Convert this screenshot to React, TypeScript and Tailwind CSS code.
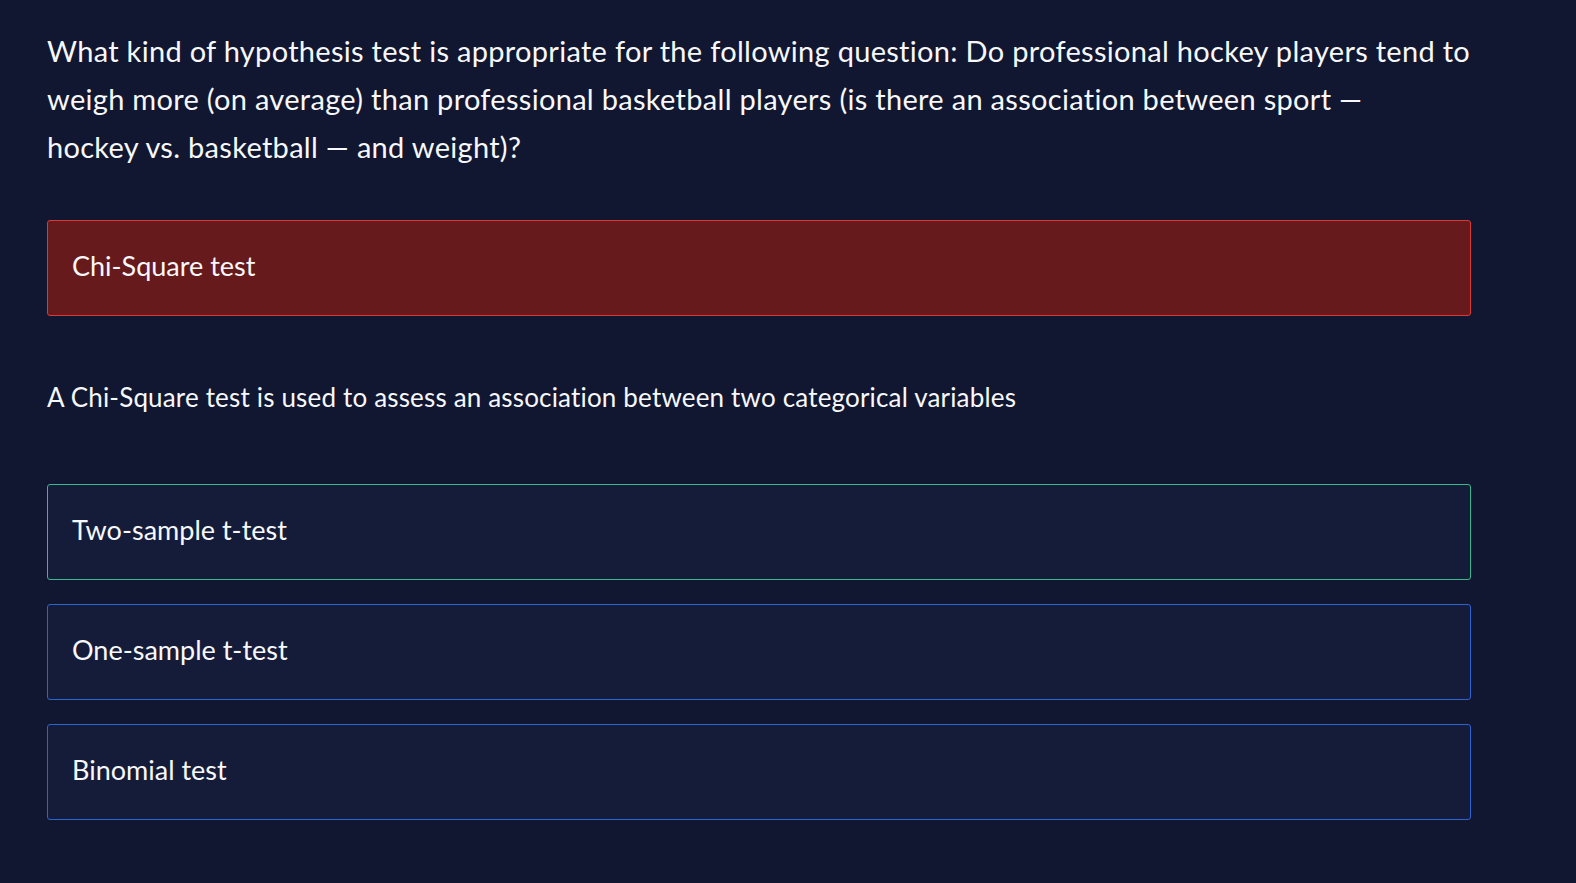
import React from "react";

const font = { fontFamily: "Lato, 'Noto Sans', sans-serif" };

export default function App() {
  return (
    <div className="min-h-[883px] w-full bg-[#111631] text-white" style={font}>
      <div className="w-[1424px] pl-[47px] pt-[27px] box-content">
        <p className="text-[29px] leading-[48px] tracking-[0.3px] text-[#f7f8fa]">
          What kind of hypothesis test is appropriate for the following question: Do professional hockey players tend to
          <br />
          weigh more (on average) than professional basketball players (is there an association between sport —
          <br />
          hockey vs. basketball — and weight)?
        </p>
        <div className="mt-[49px] flex h-[96px] items-center rounded-[3px] border border-[#dc3838] bg-[#661a1b] pb-[3px] pl-[24px] text-[27px] text-[#f7f8fa]">
          Chi-Square test
        </div>
        <p className="mt-[65px] text-[26px] leading-[32px] tracking-[0.17px] text-[#f7f8fa]">
          A Chi-Square test is used to assess an association between two categorical variables
        </p>
        <div className="mt-[71px] flex flex-col gap-[24px]">
          <div className="flex h-[96px] items-center rounded-[3px] border border-[#36b98f] bg-[#151c3a] pb-[3px] pl-[24px] text-[27px] text-[#f7f8fa]">
            Two-sample t-test
          </div>
          <div className="flex h-[96px] items-center rounded-[3px] border border-[#2d62d0] bg-[#151c3a] pb-[3px] pl-[24px] text-[27px] text-[#f7f8fa]">
            One-sample t-test
          </div>
          <div className="flex h-[96px] items-center rounded-[3px] border border-[#2d62d0] bg-[#151c3a] pb-[3px] pl-[24px] text-[27px] text-[#f7f8fa]">
            Binomial test
          </div>
        </div>
      </div>
    </div>
  );
}
